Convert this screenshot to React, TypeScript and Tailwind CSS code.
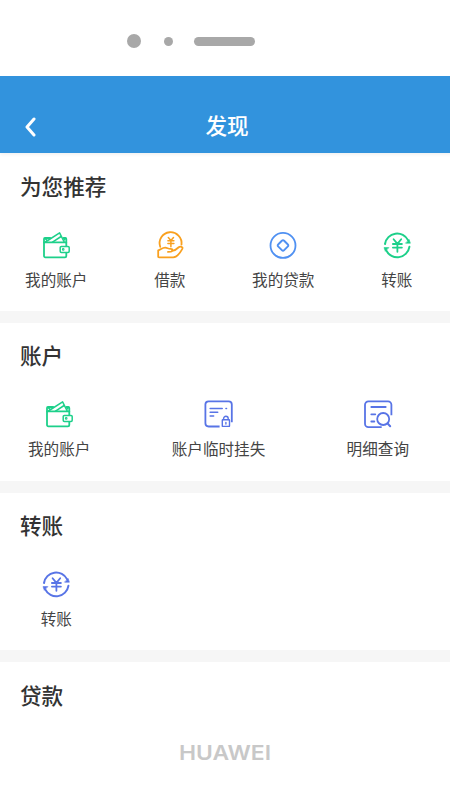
import type { ReactNode } from 'react';

type IconProps = { className?: string };

function Icon({ className = '', children }: IconProps & { children: ReactNode }) {
  return (
    <svg
      viewBox="0 0 28 28"
      fill="none"
      stroke="currentColor"
      strokeWidth="1.8"
      strokeLinecap="round"
      strokeLinejoin="round"
      className={`h-7 w-7 shrink-0 overflow-visible ${className}`}
    >
      {children}
    </svg>
  );
}

function WalletIcon({ className }: IconProps) {
  return (
    <Icon className={className}>
      <path d="M24.3 14.8V11.4H2V25a1.3 1.3 0 0 0 1.3 1.3H23a1.3 1.3 0 0 0 1.3-1.3v-2.8" />
      <path d="M2 11.4V8a1 1 0 0 1 1-1h5.2M21.5 7h1.8a1 1 0 0 1 1 1v3.4" />
      <path d="M3.4 11 17.6 1.8l4.6 9.2M10.5 11.2l8.6-5.7M3 7.4l2.4 2.4M23.5 7.4l-1.8 2" strokeWidth="1.5" />
      <rect x="18.2" y="15.4" width="9" height="6" rx="1.2" strokeWidth="1.5" />
      <circle cx="21.2" cy="18.4" r="0.8" strokeWidth="1.1" />
    </Icon>
  );
}

function LoanIcon({ className }: IconProps) {
  return (
    <Icon className={className}>
      <path d="M4.2 15.8A11 11 0 1 1 25.5 13.6" />
      <path d="m12.3 6.6 2.6 3 2.6-3M11.9 9.7h6M11.9 12.4h6M14.9 9.7v6" strokeWidth="1.5" />
      <path d="M2.2 19.4c2.6-.6 4-2.8 7-2.7 2.2.1 3 1.2 5.6 1.1 2.3 0 2.4 2.7.2 2.9l-3 .2M15.8 19.8c2.5.2 4.7-1.4 6.6-3.3 1.7-1.6 5-.8 3.9 1.4-1.6 3-4.9 8.4-9.2 8.4H3.1c-.6 0-.9-.3-.9-.9v-6" />
    </Icon>
  );
}

function CoinIcon({ className }: IconProps) {
  return (
    <Icon className={className}>
      <circle cx="14" cy="14.4" r="12.5" />
      <path d="M13.1 9.5a1.2 1.2 0 0 1 1.8 0l4 4a1.2 1.2 0 0 1 0 1.8l-4 4a1.2 1.2 0 0 1-1.8 0l-4-4a1.2 1.2 0 0 1 0-1.8Z" strokeWidth="1.9" />
    </Icon>
  );
}

function TransferIcon({ className }: IconProps) {
  return (
    <Icon className={className}>
      <path d="M2 13A12.3 12.3 0 0 1 25.2 9.4M26.4 15.8A12.3 12.3 0 0 1 3.2 19.4" strokeWidth="2" />
      <path d="M22.8 12.2h4.6l-1.2-3.4ZM5.6 16.6H1l1.2 3.4Z" fill="currentColor" strokeWidth=".6" />
      <path d="m10.6 8.2 3.8 4.7 3.8-4.7M9.9 13h9M9.9 16.6h9M14.4 13v7.8" strokeWidth="1.8" />
    </Icon>
  );
}

function FreezeIcon({ className }: IconProps) {
  return (
    <Icon className={className}>
      <path d="M15.6 26.5H4.6a3.2 3.2 0 0 1-3.2-3.2V4.6a3.2 3.2 0 0 1 3.2-3.2h20a3.2 3.2 0 0 1 3.2 3.2v17.6" strokeLinecap="butt" />
      <path d="M6.2 8.5h12M6.2 12.3h7.5M6.2 16h3.4M22 8.5h.5" strokeWidth="1.6" />
      <rect x="18.3" y="19.8" width="7.2" height="6.6" rx=".5" strokeWidth="1.4" />
      <path d="M19.6 19.6v-1a2.3 2.3 0 0 1 4.6 0v1M21.9 22.4v1.6" strokeWidth="1.4" />
    </Icon>
  );
}

function DetailIcon({ className }: IconProps) {
  return (
    <Icon className={className}>
      <path d="M17.7 27.2H4.4A3.4 3.4 0 0 1 1 23.8V4.7a3.4 3.4 0 0 1 3.4-3.4H24a3.4 3.4 0 0 1 3.4 3.4v10.6" strokeLinecap="butt" />
      <path d="M7.3 7h14.4M7.3 14.3h4M7.3 21.5h3" />
      <circle cx="19.2" cy="19" r="6" />
      <path d="m23.6 23.5 2.6 2.8" strokeWidth="2" />
    </Icon>
  );
}

type Entry = { label: string; icon: (props: IconProps) => ReactNode; color: string };

const recommended: Entry[] = [
  { label: '我的账户', icon: WalletIcon, color: 'text-[#1dd08a]' },
  { label: '借款', icon: LoanIcon, color: 'text-[#f9a01f]' },
  { label: '我的贷款', icon: CoinIcon, color: 'text-[#5091f2]' },
  { label: '转账', icon: TransferIcon, color: 'text-[#1dd08a]' },
];

const account: Entry[] = [
  { label: '我的账户', icon: WalletIcon, color: 'text-[#1dd08a]' },
  { label: '账户临时挂失', icon: FreezeIcon, color: 'text-[#5874e6]' },
  { label: '明细查询', icon: DetailIcon, color: 'text-[#5874e6]' },
];

const transfer: Entry[] = [{ label: '转账', icon: TransferIcon, color: 'text-[#5874e6]' }];

function Item({ label, icon: ItemIcon, color }: Entry) {
  return (
    <button className="flex flex-col items-center gap-2">
      <ItemIcon className={color} />
      <span className="whitespace-nowrap text-[15.6px] leading-6 text-[#444]">{label}</span>
    </button>
  );
}

function Section({ title, children }: { title: string; children?: ReactNode }) {
  return (
    <section className="h-[157.6px] shrink-0 bg-white pt-[16.4px]">
      <h2 className="pl-5 text-[21.6px] font-medium leading-8 text-[#333]">{title}</h2>
      <div className="pt-[29px]">{children}</div>
    </section>
  );
}

export default function App() {
  return (
    <div className="h-[800px] w-[450px] overflow-hidden bg-white font-['Noto_Sans_CJK_SC',sans-serif]">
      {/* Phone bezel */}
      <div className="flex h-[76px] items-start pl-[127px] pt-[34px]">
        <div className="flex h-3.5 items-center">
          <span className="h-3.5 w-3.5 rounded-full bg-[#a8a8a8]" />
          <span className="ml-[23px] h-[9px] w-[9px] rounded-full bg-[#a8a8a8]" />
          <span className="ml-[21px] h-[9px] w-[61px] rounded-full bg-[#a8a8a8]" />
        </div>
      </div>

      <div className="flex h-[636px] w-[454px] flex-col overflow-hidden bg-[#f6f6f6]">
        <header className="z-10 grid h-[77.4px] shrink-0 grid-cols-[60px_1fr_60px] items-center bg-[#3293dd] pt-[23px] text-white shadow-[0_1px_4px_rgba(0,0,0,0.08)]">
          <svg
            viewBox="0 0 12 20"
            fill="none"
            stroke="currentColor"
            strokeWidth="3"
            strokeLinecap="round"
            strokeLinejoin="round"
            className="ml-[25px] mt-0.5 h-5 w-3"
          >
            <path d="M9 2 2 10l7 8" />
          </svg>
          <h1 className="pb-0.5 text-center text-[21.6px] font-medium leading-8">发现</h1>
        </header>

        <div className="flex flex-col gap-3">
          <Section title="为您推荐">
            <div className="-ml-[0.5px] grid w-[454px] grid-cols-4">
              {recommended.map((entry) => (
                <Item key={entry.label} {...entry} />
              ))}
            </div>
          </Section>
          <Section title="账户">
            <div className="flex justify-between pl-7 pr-[45px]">
              {account.map((entry) => (
                <Item key={entry.label} {...entry} />
              ))}
            </div>
          </Section>
          <Section title="转账">
            <div className="-ml-[0.5px] grid w-[454px] grid-cols-4">
              {transfer.map((entry) => (
                <Item key={entry.label} {...entry} />
              ))}
            </div>
          </Section>
          <Section title="贷款" />
        </div>
      </div>

      <footer className="flex justify-center pt-[26px]">
        <svg viewBox="0 0 96 28" className="h-7 w-24 overflow-visible">
          <text
            x="2"
            y="22"
            textLength="92"
            lengthAdjust="spacingAndGlyphs"
            className="fill-[#c8c8c8] font-['Inter',sans-serif] text-[20.5px] font-semibold"
          >
            HUAWEI
          </text>
        </svg>
      </footer>
    </div>
  );
}
